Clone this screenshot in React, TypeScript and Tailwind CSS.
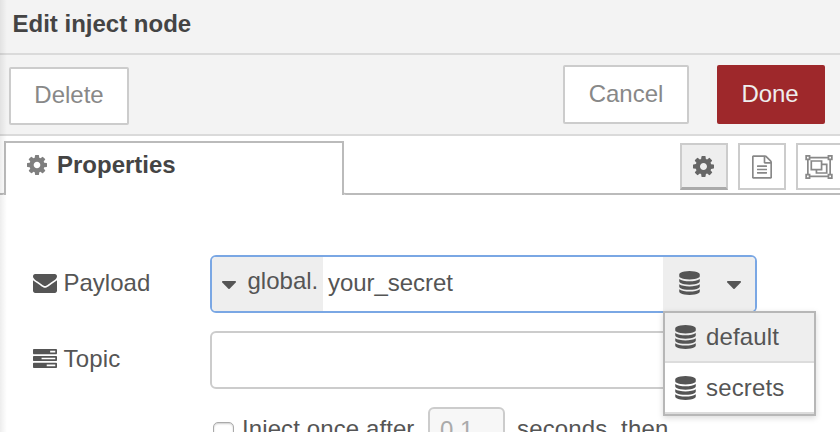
import React from 'react';

type IconProps = { className?: string };

function Icon({ d, box = '0 0 1792 1792', className = '' }: IconProps & { d: string; box?: string }) {
  return (
    <svg viewBox={box} fill="currentColor" className={`shrink-0 ${className}`} aria-hidden="true">
      <path d={d} />
    </svg>
  );
}

const Cog = ({ className }: IconProps) => (
  <Icon
    className={className}
    box="128 128 1536 1536"
    d="M1152 896q0-106-75-181t-181-75-181 75-75 181 75 181 181 75 181-75 75-181zm512-109v222q0 12-8 23t-20 13l-185 28q-19 54-39 91 35 50 107 138 10 12 10 25t-9 23q-27 37-99 108t-94 71q-12 0-26-9l-138-108q-44 23-91 38-16 136-29 186-7 28-36 28h-222q-14 0-24.5-8.5t-11.5-21.5l-28-184q-49-16-90-37l-141 107q-10 9-25 9-14 0-25-11-126-114-165-168-7-10-7-23 0-12 8-23 15-21 51-66.5t54-70.5q-27-50-41-99l-183-27q-13-2-21-12.5t-8-23.5v-222q0-12 8-23t19-13l186-28q14-46 39-92-40-57-107-138-10-12-10-24 0-10 9-23 26-36 98.5-107.5t94.5-71.5q13 0 26 10l138 107q44-23 91-38 16-136 29-186 7-28 36-28h222q14 0 24.5 8.5t11.5 21.5l28 184q49 16 90 37l142-107q9-9 24-9 13 0 25 10 129 119 165 170 7 8 7 22 0 12-8 23-15 21-51 66.5t-54 70.5q26 50 41 98l183 28q13 2 21 12.5t8 23.5z"
  />
);

const Envelope = ({ className }: IconProps) => (
  <Icon
    className={className}
    box="0 256 1792 1408"
    d="M1792 710v794q0 66-47 113t-113 47h-1472q-66 0-113-47t-47-113v-794q44 49 101 87 362 246 497 345 57 42 92.5 65.5t94.5 48 110 24.5h2q51 0 110-24.5t94.5-48 92.5-65.5q170-123 498-345 57-39 100-87zm0-294q0 79-49 151t-122 123q-376 261-468 325-10 7-42.5 31t-54 38.5-52 32.5-57.5 27-50 9h-2q-23 0-50-9t-57.5-27-52-32.5-54-38.5-42.5-31q-91-64-262-182.5t-205-142.5q-62-42-117-115.5t-55-136.5q0-78 41.5-130t118.5-52h1472q65 0 112.5 47t47.5 113z"
  />
);

const Tasks = ({ className }: IconProps) => (
  <Icon
    className={className}
    box="0 128 1792 1408"
    d="M1024 1408h640v-128h-640v128zm-384-512h1024v-128h-1024v128zm640-512h384v-128h-384v128zm512 832v256q0 26-19 45t-45 19h-1664q-26 0-45-19t-19-45v-256q0-26 19-45t45-19h1664q26 0 45 19t19 45zm0-512v256q0 26-19 45t-45 19h-1664q-26 0-45-19t-19-45v-256q0-26 19-45t45-19h1664q26 0 45 19t19 45zm0-512v256q0 26-19 45t-45 19h-1664q-26 0-45-19t-19-45v-256q0-26 19-45t45-19h1664q26 0 45 19t19 45z"
  />
);

const Database = ({ className }: IconProps) => (
  <Icon
    className={className}
    box="128 0 1536 1792"
    d="M896 768q237 0 443-43t325-127v170q0 69-103 128t-280 93.5-385 34.5-385-34.5-280-93.5-103-128v-170q119 84 325 127t443 43zm0 768q237 0 443-43t325-127v170q0 69-103 128t-280 93.5-385 34.5-385-34.5-280-93.5-103-128v-170q119 84 325 127t443 43zm0-384q237 0 443-43t325-127v170q0 69-103 128t-280 93.5-385 34.5-385-34.5-280-93.5-103-128v-170q119 84 325 127t443 43zm0-1152q208 0 385 34.5t280 93.5 103 128v128q0 69-103 128t-280 93.5-385 34.5-385-34.5-280-93.5-103-128v-128q0-69 103-128t280-93.5 385-34.5z"
  />
);

const FileText = ({ className }: IconProps) => (
  <Icon
    className={className}
    box="128 0 1536 1792"
    d="M1596 380q28 28 48 76t20 88v1152q0 40-28 68t-68 28h-1344q-40 0-68-28t-28-68v-1600q0-40 28-68t68-28h896q40 0 88 20t76 48zm-444-244v376h376q-10-29-22-41l-313-313q-12-12-41-22zm384 1528v-1024h-416q-40 0-68-28t-28-68v-416h-768v1536h1280zm-1024-864q0-14 9-23t23-9h704q14 0 23 9t9 23v64q0 14-9 23t-23 9h-704q-14 0-23-9t-9-23v-64zm736 224q14 0 23 9t9 23v64q0 14-9 23t-23 9h-704q-14 0-23-9t-9-23v-64q0-14 9-23t23-9h704zm0 256q14 0 23 9t9 23v64q0 14-9 23t-23 9h-704q-14 0-23-9t-9-23v-64q0-14 9-23t23-9h704z"
  />
);

const ObjectGroup = ({ className }: IconProps) => (
  <Icon
    className={className}
    box="0 0 2048 1792"
    d="M2048 384h-128v1024h128v384h-384v-128h-1280v128h-384v-384h128v-1024h-128v-384h384v128h1280v-128h384v384zm-256-256v128h128v-128h-128zm-1664 0v128h128v-128h-128zm128 1536v-128h-128v128h128zm1408-128v-128h128v-1024h-128v-128h-1280v128h-128v1024h128v128h1280zm256 128v-128h-128v128h128zM1280 640h384v768h-896v-256h-384v-768h896v256zM512 1024h640v-512h-640v512zM1536 1280v-512h-256v384h-384v128h640z"
  />
);

const Caret = ({ className }: IconProps) => (
  <Icon
    className={className}
    box="0 0 1024 576"
    d="M1024 64q0 26-19 45l-448 448q-19 19-45 19t-45-19l-448-448q-19-19-19-45t19-45 45-19h896q26 0 45 19t19 45z"
  />
);

function StoreMenu() {
  return (
    <div className="absolute top-[56px] left-[453px] z-10 w-[153px] border-2 border-[#b7b7b7] bg-white shadow-[0_2px_6px_rgba(0,0,0,0.15)]">
      {['default', 'secrets'].map((name, i) => (
        <div
          key={name}
          className={`flex items-center border-b-2 border-[#dcdcdc] pl-[10px] ${i === 0 ? 'h-[50px] bg-[#eeeeee]' : 'h-[51px] bg-white'}`}
        >
          <Database className="h-6 w-[21px]" />
          <span className="ml-[10px] leading-7 tracking-[0.15px]">{name}</span>
        </div>
      ))}
    </div>
  );
}

export default function App() {
  return (
    <div className="relative flex h-[432px] w-[840px] flex-col overflow-hidden bg-white font-['Liberation_Sans',Arial,sans-serif] text-2xl text-[#555555]">
      <header className="h-[55px] shrink-0 border-b-2 border-[#dadada] bg-[#f3f3f3] pt-[10px] pl-[12.5px] leading-7 font-bold text-[#444444]">
        Edit inject node
      </header>

      <div className="flex h-[81px] shrink-0 items-start border-b-2 border-[#dadada] bg-[#f3f3f3] pt-[10px] pl-[9px] text-[#888888]">
        <button className="mt-[2px] h-[58px] w-[120px] rounded-[2px] border-2 border-[#cccccc] bg-white pb-[2px]">
          Delete
        </button>
        <button className="ml-[434px] h-[59px] w-[126px] rounded-[2px] border-2 border-[#cccccc] bg-white pb-[2px]">
          Cancel
        </button>
        <button className="ml-[28px] h-[59px] w-[108px] rounded-[2px] bg-[#9e282b] pr-[2px] pb-[2px] tracking-[-0.1px] text-[#eeeeee]">
          Done
        </button>
      </div>

      <nav className="flex h-[59px] shrink-0 pt-[5px]">
        <div className="w-[5px] shrink-0 rounded-br-[3px] border-b-2 border-[#bbbbbb]" />
        <div className="-ml-px flex h-[54px] w-[340px] shrink-0 items-center border-2 border-b-0 border-[#bbbbbb] pb-[9px] pl-[21px]">
          <Cog className="size-[20px] text-[#7f7f7f]" />
          <span className="ml-[10px] leading-7 font-bold text-[#444444]">Properties</span>
        </div>
        <div className="-ml-px flex w-[497px] shrink-0 gap-[10px] overflow-hidden rounded-bl-[3px] border-b-2 border-[#bbbbbb] pt-[2px] pl-[337px]">
          <div className="flex h-[47px] w-12 shrink-0 items-center justify-center border-2 border-b-3 border-[#cccccc] border-b-[#aaaaaa] bg-[#eeeeee] pr-px">
            <Cog className="size-[21px] text-[#666666]" />
          </div>
          <div className="flex h-[47px] w-12 shrink-0 items-center justify-center border-2 border-[#cccccc] text-[#888888]">
            <FileText className="h-[24px] w-[20px]" />
          </div>
          <div className="flex h-[47px] w-12 shrink-0 items-center border-2 border-[#cccccc] pl-[7px] text-[#888888]">
            <ObjectGroup className="h-6 w-[28px]" />
          </div>
        </div>
      </nav>

      <main className="flex shrink-0 flex-col pt-[60px] pl-[33px]">
        <div className="flex h-[58px]">
          <div className="flex h-[56px] w-[177px] items-center">
            <Envelope className="h-[19px] w-6" />
            <span className="ml-[6.5px] leading-7">Payload</span>
          </div>
          <div className="relative flex h-[58px] w-[547px]">
            <div className="flex w-full overflow-hidden rounded-[6px] border-2 border-[#7aa7e4] bg-white">
              <div className="flex w-[111px] shrink-0 items-center bg-[#eeeeee] pl-[9.5px]">
                <Caret className="mt-[2px] h-[8px] w-[14px]" />
                <span className="mb-[6px] ml-[12px] leading-7">global.</span>
              </div>
              <div className="w-[340px] shrink-0 pt-[12px] pl-[5px] leading-7 tracking-[-0.05px]">your_secret</div>
              <div className="flex flex-1 items-center bg-[#eeeeee] pl-[16px]">
                <Database className="mb-[3px] h-6 w-[21px]" />
                <Caret className="mt-[2px] ml-[27px] h-[8px] w-[14px]" />
              </div>
            </div>
            <StoreMenu />
          </div>
        </div>

        <div className="mt-[18px] flex h-[58px]">
          <div className="flex h-[56px] w-[177px] items-center">
            <Tasks className="mb-[2px] h-[19px] w-6" />
            <span className="ml-[6.5px] leading-7 tracking-[0.2px]">Topic</span>
          </div>
          <div className="w-[547px] rounded-[6px] border-2 border-[#cccccc] bg-white" />
        </div>

        <div className="mt-[18px] flex h-[58px] pl-[180px]">
          <div className="mt-[15px] size-[21px] shrink-0 rounded-[5px] border border-[#aaaaaa] bg-white shadow-[inset_0_1px_2px_rgba(0,0,0,0.2)]" />
          <span className="mt-[8px] ml-[8px] w-[186px] shrink-0 leading-7 tracking-[0.1px]">Inject once after</span>
          <div className="w-[77px] shrink-0 rounded-[6px] border-2 border-[#cccccc] bg-[#f7f7f7] pt-[7px] pl-[10px] leading-7 text-[#aaaaaa]">
            0.1
          </div>
          <span className="mt-[8px] ml-[12px] leading-7 tracking-[0.15px]">seconds, then</span>
        </div>
      </main>

      <div className="pointer-events-none absolute inset-y-0 left-0 w-[7px] bg-linear-to-r from-black/7 to-transparent" />
    </div>
  );
}
